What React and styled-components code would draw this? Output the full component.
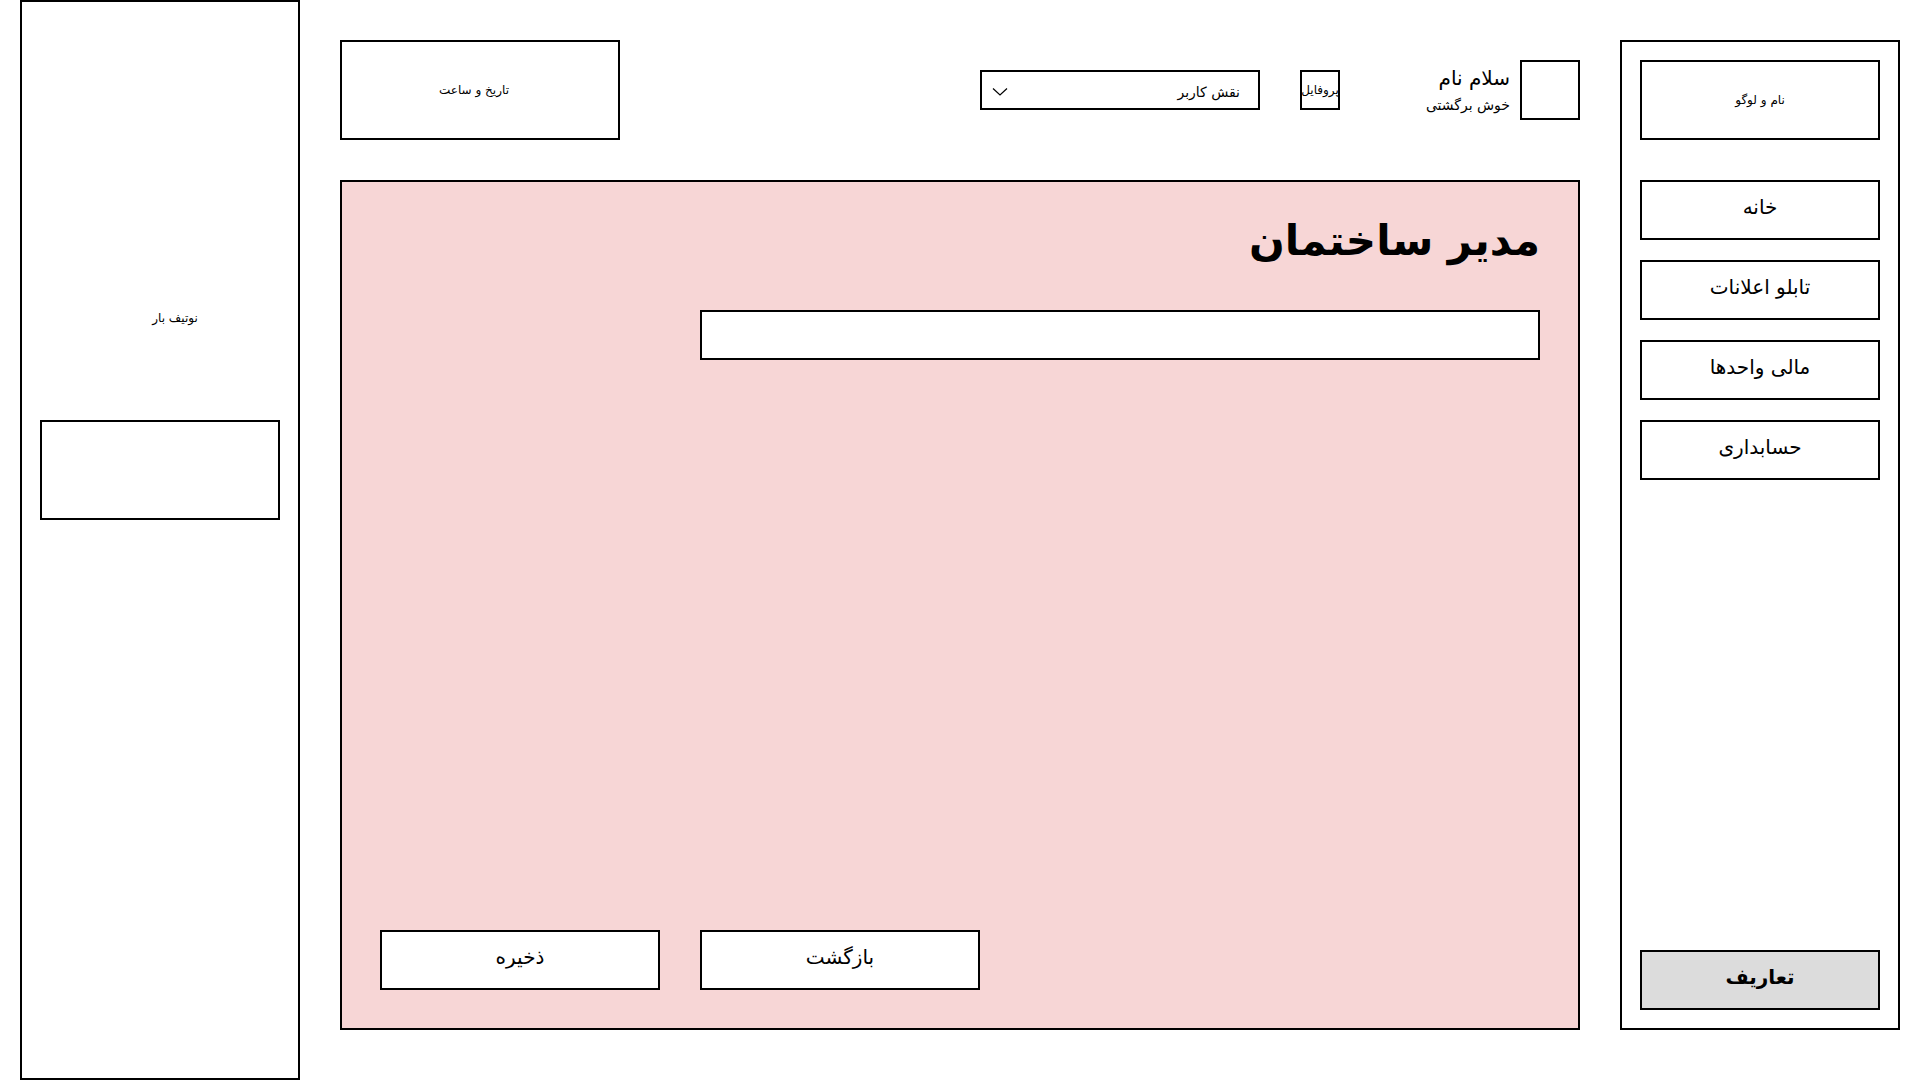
import React from "react";
import styled, { createGlobalStyle } from "styled-components";

const Global = createGlobalStyle`
  * { box-sizing: border-box; }
  html, body { margin: 0; padding: 0; background: #fff; }
  body { font-family: "DejaVu Sans", "Noto Sans", sans-serif; color: #000; overflow: hidden; }
`;

const Page = styled.div`
  direction: rtl;
  display: flex;
  align-items: flex-start;
  gap: 40px;
  padding: 0 20px;
  width: 1920px;
  height: 1080px;
`;

const Box = styled.div`
  border: 2px solid #000;
  background: ${(p) => p.$bg || "#fff"};
`;

const RightSidebar = styled(Box)`
  width: 280px;
  height: 990px;
  margin-top: 40px;
  padding: 18px;
  display: flex;
  flex-direction: column;
`;

const LogoBox = styled(Box)`
  height: 80px;
  display: flex;
  align-items: center;
  justify-content: center;
  font-size: 12px;
  margin-bottom: 40px;
`;

const NavList = styled.nav`
  display: flex;
  flex-direction: column;
  gap: 20px;
`;

const NavButton = styled(Box)`
  height: 60px;
  display: flex;
  align-items: center;
  justify-content: center;
  padding-bottom: 6px;
  font-size: 20px;
  font-weight: ${(p) => (p.$bold ? 700 : 400)};
  background: ${(p) => (p.$gray ? "#dcdcdc" : "#fff")};
`;

const SidebarFooter = styled.div`
  margin-top: auto;
`;

const Main = styled.main`
  width: 1240px;
  display: flex;
  flex-direction: column;
  gap: 40px;
  padding-top: 40px;
`;

const Header = styled.header`
  height: 100px;
  display: flex;
  align-items: center;
`;

const UserBlock = styled.div`
  width: 220px;
  height: 60px;
  display: flex;
  align-items: center;
  gap: 10px;
  margin-left: 20px;
`;

const Avatar = styled(Box)`
  width: 60px;
  height: 60px;
  flex-shrink: 0;
`;

const Greeting = styled.div`
  display: flex;
  flex-direction: column;
  gap: 6px;
`;

const Hello = styled.div`
  font-size: 20px;
  line-height: 24px;
`;

const Welcome = styled.div`
  font-size: 14px;
  line-height: 18px;
`;

const ProfileButton = styled(Box)`
  width: 40px;
  height: 40px;
  display: flex;
  align-items: center;
  justify-content: center;
  font-size: 12px;
  white-space: nowrap;
  margin-left: 40px;
`;

const RoleSelect = styled(Box)`
  width: 280px;
  height: 40px;
  display: flex;
  align-items: center;
  justify-content: space-between;
  padding: 3px 18px 0 10px;
  font-size: 14px;
`;

const DateBox = styled(Box)`
  width: 280px;
  height: 100px;
  margin-right: auto;
  display: flex;
  align-items: center;
  justify-content: center;
  padding-right: 12px;
  font-size: 12px;
`;

const Panel = styled(Box)`
  height: 850px;
  padding: 38px;
  display: flex;
  flex-direction: column;
`;

const Title = styled.h1`
  margin: -4px 0 4px;
  font-size: 42px;
  font-weight: 700;
  line-height: 50px;
`;

const TextInput = styled(Box)`
  width: 840px;
  height: 50px;
  margin-top: 40px;
`;

const Actions = styled.div`
  margin-top: auto;
  display: flex;
  gap: 40px;
  justify-content: flex-end;
`;

const ActionButton = styled(Box)`
  width: 280px;
  height: 60px;
  display: flex;
  align-items: center;
  justify-content: center;
  padding-bottom: 6px;
  font-size: 20px;
`;

const LeftSidebar = styled(Box)`
  width: 280px;
  height: 1080px;
  padding: 304px 18px 18px;
  display: flex;
  flex-direction: column;
`;

const NotifLabel = styled.div`
  font-size: 12px;
  line-height: 24px;
  text-align: center;
  padding-left: 30px;
`;

const NotifBox = styled(Box)`
  height: 100px;
  margin-top: 90px;
`;

const Chevron = () => (
  <svg width="16" height="10" viewBox="0 0 16 10" fill="none">
    <polyline points="1,1.5 8,8 15,1.5" stroke="#000" strokeWidth="1.2" />
  </svg>
);

export default function App() {
  return (
    <>
      <Global />
      <Page>
        <RightSidebar>
          <LogoBox>نام و لوگو</LogoBox>
          <NavList>
            <NavButton>خانه</NavButton>
            <NavButton>تابلو اعلانات</NavButton>
            <NavButton>مالی واحدها</NavButton>
            <NavButton>حسابداری</NavButton>
          </NavList>
          <SidebarFooter>
            <NavButton $gray $bold>تعاریف</NavButton>
          </SidebarFooter>
        </RightSidebar>

        <Main>
          <Header>
            <UserBlock>
              <Avatar />
              <Greeting>
                <Hello>سلام نام</Hello>
                <Welcome>خوش برگشتی</Welcome>
              </Greeting>
            </UserBlock>
            <ProfileButton>پروفایل</ProfileButton>
            <RoleSelect>
              <span>نقش کاربر</span>
              <Chevron />
            </RoleSelect>
            <DateBox>تاریخ و ساعت</DateBox>
          </Header>

          <Panel $bg="#f7d6d6">
            <Title>مدیر ساختمان</Title>
            <TextInput />
            <Actions>
              <ActionButton>بازگشت</ActionButton>
              <ActionButton>ذخیره</ActionButton>
            </Actions>
          </Panel>
        </Main>

        <LeftSidebar>
          <NotifLabel>نوتیف بار</NotifLabel>
          <NotifBox />
        </LeftSidebar>
      </Page>
    </>
  );
}
